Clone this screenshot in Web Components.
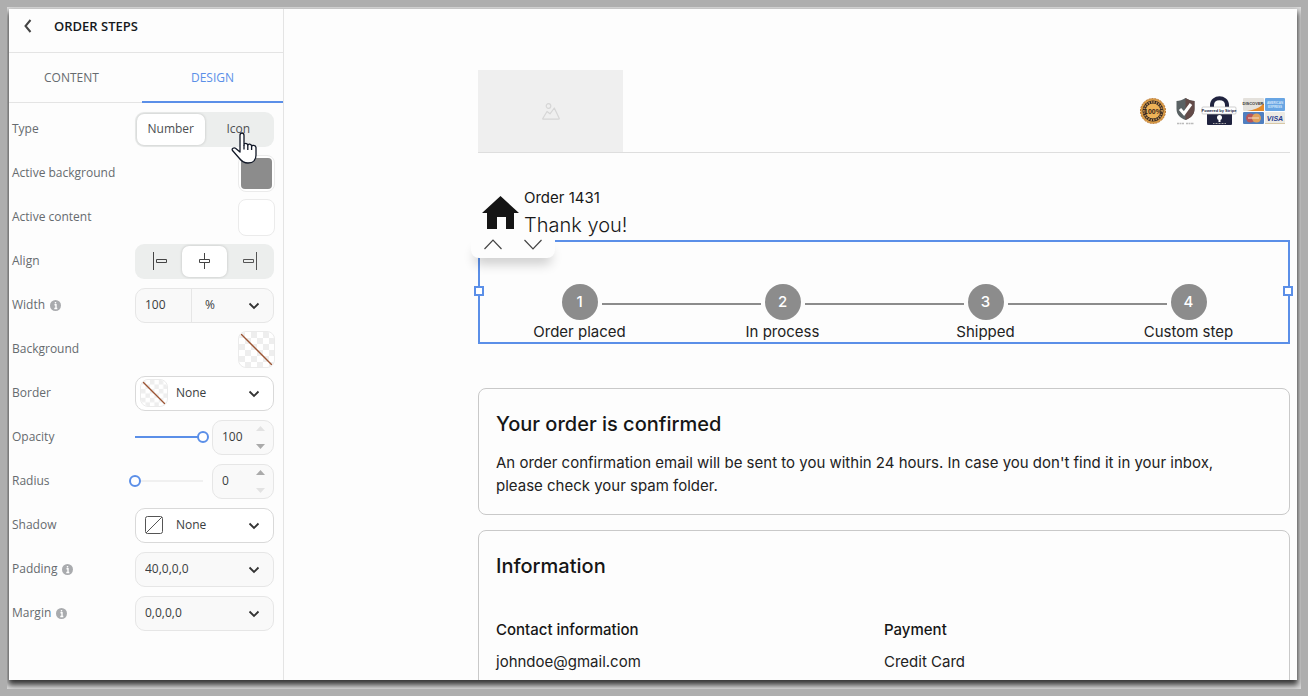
<!DOCTYPE html>
<html lang="en">
<head>
<meta charset="utf-8">
<title>Order steps</title>
<style>
html, body { margin: 0; height: 100%; }
body { background: #aeaeae; font-family: "Open Sans", "Noto Sans", sans-serif; overflow: hidden; }
</style>
</head>
<body>
<page-editor></page-editor>
<script>
const define = (name, html, setup) => {
  const template = document.createElement('template');
  template.innerHTML = html;
  customElements.define(name, class extends HTMLElement {
    constructor() {
      super();
      this.attachShadow({ mode: 'open' }).append(template.content.cloneNode(true));
    }
    connectedCallback() { if (setup) setup(this, this.shadowRoot); }
  });
};

const chevron = `<svg class="chevron" width="12" height="8" viewBox="0 0 12 8" aria-hidden="true"><path d="M1.500 1.500 6 6l4.500-4.500" fill="none" stroke="#333" stroke-width="1.800"/></svg>`;

define('setting-row', `
<style>
:host { display: grid; grid-template-columns: 123px 139px; height: 44px; align-items: center; }
.label { display: flex; align-items: center; gap: 5px; font-size: 12px; line-height: 16px; color: #666b6f; white-space: nowrap; }
.control { display: flex; justify-content: flex-end; align-items: center; }
</style>
<div class="label"><span id="name"></span></div>
<div class="control"><slot></slot></div>`, (el, root) => {
  root.getElementById('name').textContent = el.getAttribute('label');
  if (el.hasAttribute('info')) {
    root.querySelector('.label').insertAdjacentHTML('beforeend',
      `<svg width="11" height="11" viewBox="0 0 11 11" role="img" aria-label="Info"><circle cx="5.500" cy="5.500" r="5.500" fill="#a9abae"/><path d="M4.500 4.700H6V8.500M4.300 8.500h3M5.500 2v1.500" stroke="#fff" stroke-width="1.400" fill="none"/></svg>`);
  }
});

define('segmented-control', `
<style>
:host { display: flex; box-sizing: border-box; width: 139px; height: 35px; padding: 2px; border-radius: 9px; background: #eceeed; }
::slotted(button) { display: flex; align-items: center; justify-content: center; flex: 1 1 0; padding: 0; border: 0; border-radius: 7px; background: none; font: 12px/16px "Open Sans", sans-serif; color: #4c4f52; }
::slotted(button[aria-pressed="true"]) { background: #fff; box-shadow: 0 0 3px #0003; }
</style><slot></slot>`);

define('color-swatch', `
<style>
:host { display: block; margin-right: -1px; }
button { display: block; box-sizing: border-box; width: 37px; height: 37px; padding: 2px; border: 1px solid #ebebeb; border-radius: 8px; background: #fff; overflow: hidden; }
span { display: block; height: 31px; border-radius: 4px; background: var(--swatch, #fff); }
svg { display: none; }
:host([empty]) button { padding: 0; }
:host([empty]) span { display: none; }
:host([empty]) svg { display: block; }
:host([small]) { margin: 0; }
:host([small]) button { width: 28px; height: 28px; }
</style>
<button type="button"><span></span>
<svg width="100%" height="100%" viewBox="0 0 35 35" aria-hidden="true">
<defs><pattern id="check" width="12" height="12" patternUnits="userSpaceOnUse"><path d="M0 0h6v6H0zM6 6h6v6H6z" fill="#eee"/></pattern></defs>
<rect width="35" height="35" fill="url(#check)"/><path class="slash" d="M2 2l31 31" style="stroke:#9c5433;stroke-width:1.300px;vector-effect:non-scaling-stroke"/></svg></button>`, (el, root) => {
  root.querySelector('button').setAttribute('aria-label', el.getAttribute('name'));
});

define('drop-down', `
<style>
:host { display: grid; width: 139px; height: 35px; }
.box { display: flex; align-items: center; box-sizing: border-box; height: 35px; border: 1px solid #e6e6e6; border-radius: 10px; background: #f9f9f9; position: relative; overflow: hidden; }
:host([light]) .box { background: #fff; border-color: #d9d9d9; }
.lead { display: none; padding-left: 4px; width: 27px; }
:host([light]) .lead { display: flex; }
select { appearance: none; flex: 1; align-self: stretch; min-width: 0; margin: 0; padding: 0 30px 0 9px; border: 0; background: none; color: #3a3d40; font: 12px/16px "Open Sans", sans-serif; }
.chevron { position: absolute; right: 13px; top: 13px; pointer-events: none; }
</style>
<div class="box"><div class="lead"><slot name="lead"></slot></div><select><option></option></select>${chevron}</div>`, (el, root) => {
  root.querySelector('select').setAttribute('aria-label', el.getAttribute('name'));
  root.querySelector('option').textContent = el.getAttribute('value');
});

define('unit-field', `
<style>
:host { display: block; width: 139px; }
.box { display: flex; box-sizing: border-box; height: 35px; border: 1px solid #e6e6e6; border-radius: 10px; background: #f9f9f9; position: relative; overflow: hidden; }
input, select { box-sizing: border-box; margin: 0; border: 0; background: none; color: #3a3d40; font: 12px/16px "Open Sans", sans-serif; }
input { width: 56px; padding: 0 0 0 9px; border-right: 1px solid #e6e6e6; }
select { appearance: none; flex: 1; padding: 0 30px 0 13px; }
.chevron { position: absolute; right: 13px; top: 13px; pointer-events: none; }
</style>
<div class="box"><input type="text" value="100" aria-label="Width"><select aria-label="Width unit"><option>%</option></select>${chevron}</div>`);

define('slider-field', `
<style>
:host { display: flex; width: 145px; flex: none; align-items: center; gap: 3px; }
input[type=range] { appearance: none; width: 80px; height: 12px; margin: 0; background: none; }
input[type=range]::-webkit-slider-runnable-track { height: 12px; background: var(--track) 6px 5px / 68px 2px no-repeat; }
input[type=range]::-webkit-slider-thumb { appearance: none; box-sizing: border-box; width: 12px; height: 12px; border: 2px solid #5b8fe8; border-radius: 50%; background: #fff; }
.box { display: flex; align-items: center; box-sizing: border-box; width: 62px; height: 35px; border: 1px solid #e6e6e6; border-radius: 10px; background: #f9f9f9; }
.box input { box-sizing: border-box; width: 43px; margin: 0; padding: 0 0 0 9px; border: 0; background: none; color: #3a3d40; font: 12px/16px "Open Sans", sans-serif; }
.spin { display: flex; flex-direction: column; gap: 13px; }
.spin button { display: block; padding: 0; border: 0; background: none; width: 9px; height: 5px; line-height: 0; color: #aaa; }
.spin button[disabled] { color: #e2e2e2; }
</style>
<input type="range" min="0" max="100">
<div class="box"><input type="text" inputmode="numeric">
<div class="spin"><button type="button" aria-label="Increase"><svg width="9" height="5" viewBox="0 0 9 5"><path d="M0 5 4.500 0 9 5z" fill="currentColor"/></svg></button>
<button type="button" aria-label="Decrease"><svg width="9" height="5" viewBox="0 0 9 5"><path d="M0 0h9L4.500 5z" fill="currentColor"/></svg></button></div></div>`, (el, root) => {
  const value = el.getAttribute('value');
  const [range, text] = root.querySelectorAll('input');
  range.value = value; text.value = value;
  range.setAttribute('aria-label', el.getAttribute('name'));
  text.setAttribute('aria-label', el.getAttribute('name') + ' value');
  el.style.setProperty('--track', `linear-gradient(90deg, #5b8fe8 ${value}%, #f0f0f0 ${value}%)`);
  const [up, down] = root.querySelectorAll('button');
  up.disabled = value === '100'; down.disabled = value === '0';
});

define('mouse-hand', `
<style>:host { position: absolute; left: 222px; top: 122px; width: 27px; height: 34px; pointer-events: none; } svg { display: block; }</style>
<svg width="27" height="34" viewBox="0 0 27 34" aria-hidden="true"><path d="M9 21V4.500C9 2.800 9.900 2 11 2s2 .8 2 2.500V14c0-2 3.600-2.300 3.800.5.3-2 3.600-1.800 3.800.8.400-1.500 3.900-1.300 4.400 1.200V24c0 4-2.200 8-8 8-4 0-6.200-1.500-8.500-4.500L1.500 19.500c-1.200-2 1.500-3.300 3-2.200z" fill="#fff" stroke="#111827" stroke-width="1.300" stroke-linejoin="round"/><path d="M13 14v4.500M16.800 14.500V19M20.600 15.300V19" stroke="#111827" stroke-width="1.300" fill="none"/></svg>`);

define('design-panel', `
<style>
:host { display: block; position: relative; box-sizing: border-box; border-right: 1px solid #e4e4e4; background: #fdfdfd; }
header { display: flex; align-items: center; gap: 20px; box-sizing: border-box; height: 44px; padding: 0 0 9px 14px; border-bottom: 1px solid #e4e4e4; }
.back { display: block; padding: 0; border: 0; background: none; width: 11px; height: 14px; }
.back svg { display: block; }
h1 { margin: 0; font: 600 13px/16px "Open Sans", sans-serif; color: #16191d; }
.tabs { display: grid; grid-template-columns: 133px 1fr; height: 50px; box-sizing: border-box; border-bottom: 1px solid #e4e4e4; }
.tabs button { height: 50px; box-sizing: border-box; margin: 0; padding: 2px 0 0; border: 0; border-bottom: 2px solid transparent; background: none; font: 12px/16px "Open Sans", sans-serif; color: #666b6f; }
.tabs button:first-child { padding-right: 8px; }
.tabs button[aria-selected=true] { color: #5b8fe8; border-color: #5b8fe8; }
.rows { padding: 4px 9px 0 3px; }
.lead { display: block; margin-left: 5px; }
</style>
<header><button class="back" type="button" aria-label="Back"><svg width="11" height="14" viewBox="0 0 11 14"><path d="M7.500 1 2.500 7l5 6" fill="none" stroke="#444" stroke-width="2"/></svg></button><h1>ORDER STEPS</h1></header>
<div class="tabs" role="tablist"><button role="tab" aria-selected="false">CONTENT</button><button role="tab" aria-selected="true">DESIGN</button></div>
<div class="rows">
<setting-row label="Type"><segmented-control><button type="button" aria-pressed="true">Number</button><button type="button" aria-pressed="false">Icon</button></segmented-control></setting-row>
<setting-row label="Active background"><color-swatch name="Active background" style="--swatch:#8c8c8c"></color-swatch></setting-row>
<setting-row label="Active content"><color-swatch name="Active content"></color-swatch></setting-row>
<setting-row label="Align"><segmented-control>
<button type="button" aria-pressed="false" aria-label="Left"><svg width="16" height="18" viewBox="0 0 16 18"><path d="M1.500 0v18M4.500 7.500h10v3h-10z" fill="none" stroke="#444"/></svg></button>
<button type="button" aria-pressed="true" aria-label="Center"><svg width="13" height="18" viewBox="0 0 13 18"><path d="M6.500 1v6.500M6.500 10.500V17M1.500 7.500h10v3h-10z" fill="none" stroke="#444"/></svg></button>
<button type="button" aria-pressed="false" aria-label="Right"><svg width="16" height="18" viewBox="0 0 16 18"><path d="M14.500 0v18M1.500 7.500h10v3h-10z" fill="none" stroke="#555"/></svg></button>
</segmented-control></setting-row>
<setting-row label="Width" info><unit-field></unit-field></setting-row>
<setting-row label="Background"><color-swatch name="Background" empty></color-swatch></setting-row>
<setting-row label="Border"><drop-down name="Border" value="None" light><color-swatch slot="lead" name="Border color" empty small></color-swatch></drop-down></setting-row>
<setting-row label="Opacity"><slider-field name="Opacity" value="100"></slider-field></setting-row>
<setting-row label="Radius"><slider-field name="Radius" value="0"></slider-field></setting-row>
<setting-row label="Shadow"><drop-down name="Shadow" value="None" light><svg class="lead" slot="lead" width="18" height="18" viewBox="0 0 18 18" aria-hidden="true"><rect x=".5" y=".5" width="17" height="17" rx="2" fill="none" stroke="#555"/><path d="M1 17 17 1" stroke="#555"/></svg></drop-down></setting-row>
<setting-row label="Padding" info><drop-down name="Padding" value="40,0,0,0"></drop-down></setting-row>
<setting-row label="Margin" info><drop-down name="Margin" value="0,0,0,0"></drop-down></setting-row>
</div>
<mouse-hand></mouse-hand>`);

define('trust-badges', `
<style>:host { display: block; } svg { display: block; }</style>
<svg width="150" height="34" viewBox="0 0 150 34" role="img" aria-label="Trust badges" font-family="Liberation Sans, sans-serif" font-weight="bold">
<circle cx="17" cy="17" r="12.500" fill="#d99a45" stroke="#b9772f" stroke-dasharray="2 1"/><circle cx="17" cy="17" r="10.500" fill="#2c2420"/><circle cx="17" cy="17" r="9" fill="none" stroke="#bb8a50" stroke-width="2" stroke-dasharray="1.500 1"/><circle cx="17" cy="17" r="7.500" fill="#eeb257"/><text x="17" y="19.500" font-size="7" text-anchor="middle" fill="#3a2418">100%</text>
<path d="M49.500 4c3 2 6 3 9 3v8c0 6-4 9-9 11-5-2-9-5-9-11V7c3 0 6-1 9-3z" fill="#5a6264"/><path d="M49.500 4c3 2 6 3 9 3v8c0 6-4 9-9 11z" fill="#634b48"/><path d="m44 15 4 4.500 7-9.500" fill="none" stroke="#fff" stroke-width="3"/><path d="M41 29.500h7m2 0h8" stroke="#bbb" stroke-width="1.500" stroke-dasharray="2 .5"/>
<path d="M76 14v-3c0-9 15-9 15 0v3" fill="none" stroke="#20233f" stroke-width="4"/><rect x="71" y="13" width="25" height="18" rx="1" fill="#20233f"/><rect x="66" y="13" width="34" height="7" rx="1" fill="#fff" stroke="#bbb" stroke-width=".7"/><text x="83" y="18.300" font-size="4" text-anchor="middle" fill="#20233f">Powered by Stripe</text><circle cx="83.500" cy="23.500" r="2.500" fill="#fff"/><path d="M82.500 23h2v5h-2z" fill="#fff"/><path d="M77 29.500h13" stroke="#aaa" stroke-width="1" stroke-dasharray="1 .5"/>
<rect x="107" y="4" width="21" height="13" rx="1" fill="#e4e1dc"/><path d="M128 9v8h-17c7-1 13-3 17-8z" fill="#e58b2a"/><text x="117" y="10.500" font-size="4" text-anchor="middle" fill="#333">DISCOVER</text>
<rect x="129" y="4" width="20" height="13" rx="1" fill="#68a5e3"/><text x="139" y="10" font-size="3" text-anchor="middle" fill="#d6e8fb">AMERICAN</text><text x="139" y="14" font-size="3" text-anchor="middle" fill="#d6e8fb">EXPRESS</text>
<rect x="107" y="18" width="21" height="12" rx="1" fill="#4f7fc0"/><circle cx="114.500" cy="24" r="4.500" fill="#b8575a"/><circle cx="120.500" cy="24" r="4.500" fill="#e0a15a"/><path d="M112 24h11" stroke="#f4dfd0" stroke-width="1"/>
<rect x="129" y="18" width="20" height="12" rx="1" fill="#eceae4"/><path d="M129 29h20v1h-20z" fill="#d8c8a6"/><text x="139" y="26.500" font-size="7" font-style="italic" text-anchor="middle" fill="#243b8f">VISA</text>
</svg>`);

define('store-header', `
<style>
:host { display: flex; align-items: center; justify-content: space-between; border-bottom: 1px solid #dedede; height: 82px; }
.logo { display: flex; align-items: center; justify-content: center; width: 145px; height: 82px; background: #efefef; }
trust-badges { margin-right: 4px; }
</style>
<div class="logo"><svg width="18" height="17" viewBox="0 0 18 17" role="img" aria-label="Logo placeholder"><circle cx="6.500" cy="3" r="2.300" fill="none" stroke="#d6d6d6" stroke-width="1.200"/><path d="M.8 15.500 5 8.500l3 2.300L12.300 5l5 10.500q0 .7-1 .7H1.500q-1 0-.7-.7z" fill="none" stroke="#d6d6d6" stroke-width="1.200" stroke-linejoin="round"/></svg></div>
<trust-badges></trust-badges>`);

define('thank-you', `
<style>
:host { display: flex; gap: 5px; padding-left: 4px; color: #181818; }
svg { display: block; margin-top: 10px; }
p { margin: 0; font-size: 15px; line-height: 24px; }
h2 { margin: 0; font-size: 20px; font-weight: 300; line-height: 30px; }
</style>
<svg width="37" height="33" viewBox="0 0 37 33" aria-hidden="true"><path d="M18.500 0 37 17h-5v16h-8V21h-9v12H5V17H0z" fill="#151515"/></svg>
<div><p>Order 1431</p><h2>Thank you!</h2></div>`);

define('order-step', `
<style>
:host { display: flex; flex-direction: column; align-items: center; gap: 1px; position: relative; color: #222; }
.dot { display: flex; align-items: center; justify-content: center; width: 36px; height: 36px; border-radius: 50%; background: #8c8c8c; color: #fff; font-size: 15px; font-weight: 500; line-height: 20px; }
.label { font-size: 15px; line-height: 22px; }
.line { position: absolute; left: calc(50% + 22px); top: 19px; width: calc(100% - 44px); height: 2px; background: #8c8c8c; }
:host([last]) .line { display: none; }
</style>
<div class="dot"></div><div class="label"><slot></slot></div><div class="line"></div>`, (el, root) => {
  root.querySelector('.dot').textContent = el.getAttribute('number');
});

define('order-steps', `
<style>
:host { display: block; position: relative; box-sizing: border-box; height: 104px; padding-top: 44px; outline: 2px solid #5b8fe8; outline-offset: -2px; }
.steps { display: grid; grid-template-columns: repeat(4, 1fr); }
.handle { position: absolute; top: 46px; box-sizing: border-box; width: 10px; height: 10px; border: 2px solid #5b8fe8; background: #fff; }
.left { left: -4px; } .right { right: -3px; }
.move { position: absolute; left: -7px; top: -4px; display: flex; justify-content: space-between; align-items: flex-end; box-sizing: border-box; width: 84px; height: 22px; padding: 0 12px 8px; border-radius: 0 0 8px 8px; background: #fdfdfd; box-shadow: 0 10px 12px -4px #0003; }
.move button { display: block; padding: 0; border: 0; background: none; line-height: 0; }
</style>
<div class="steps"><order-step number="1">Order placed</order-step><order-step number="2">In process</order-step><order-step number="3">Shipped</order-step><order-step number="4" last>Custom step</order-step></div>
<div class="handle left"></div><div class="handle right"></div>
<div class="move"><button type="button" aria-label="Move up"><svg width="20" height="11" viewBox="0 0 20 11"><path d="m1.500 10 8.500-9 8.500 9" fill="none" stroke="#444" stroke-width="1.200"/></svg></button><button type="button" aria-label="Move down"><svg width="20" height="11" viewBox="0 0 20 11"><path d="m1.500 1 8.500 9 8.500-9" fill="none" stroke="#444" stroke-width="1.200"/></svg></button></div>`);

define('info-card', `
<style>
:host { display: block; border: 1px solid #c9c9c9; border-radius: 8px; padding: 23px 17px 17px; color: #222; }
h2 { margin: 0; font-size: 20px; font-weight: 500; line-height: 24px; color: #161616; }
</style>
<h2></h2><slot></slot>`, (el, root) => {
  root.querySelector('h2').textContent = el.getAttribute('heading');
});

define('store-page', `
<style>
:host { display: block; min-width: 0; overflow: hidden; box-sizing: border-box; padding: 61px 7px 0 194px; background: #fdfdfd; font-family: Inter, sans-serif; font-weight: 400; }
thank-you { margin-top: 33px; }
.confirmed { margin-top: 44px; }
.information { margin-top: 15px; }
p { margin: 0; font-size: 15px; line-height: 23px; }
.confirmed p { margin-top: 15px; padding-right: 20px; }
.details { display: grid; grid-template-columns: 1fr 1fr; margin-top: 40px; padding-bottom: 60px; }
h3 { margin: 0 0 9px; font-size: 15px; font-weight: 500; line-height: 23px; color: #161616; }
</style>
<store-header></store-header>
<thank-you></thank-you>
<order-steps></order-steps>
<info-card class="confirmed" heading="Your order is confirmed"><p>An order confirmation email will be sent to you within 24 hours. In case you don't find it in your inbox, please check your spam folder.</p></info-card>
<info-card class="information" heading="Information"><div class="details"><div><h3>Contact information</h3><p>johndoe@gmail.com</p></div><div><h3>Payment</h3><p>Credit Card</p></div></div></info-card>`);

define('page-editor', `
<style>
:host { display: flex; box-sizing: border-box; height: 100vh; padding: 7px; }
.backing { display: flex; flex: 1; min-width: 0; box-sizing: border-box; padding: 2px 4px 9px 2px; background: #dcdcdc; overflow: hidden; }
.window { display: grid; grid-template-columns: 275px minmax(0, 1fr); grid-template-rows: minmax(0, 1fr); flex: 1; min-width: 0; box-shadow: 0 4px 6px 1px #333; }
</style>
<div class="backing"><div class="window"><design-panel></design-panel><store-page></store-page></div></div>`);
</script>
</body>
</html>
